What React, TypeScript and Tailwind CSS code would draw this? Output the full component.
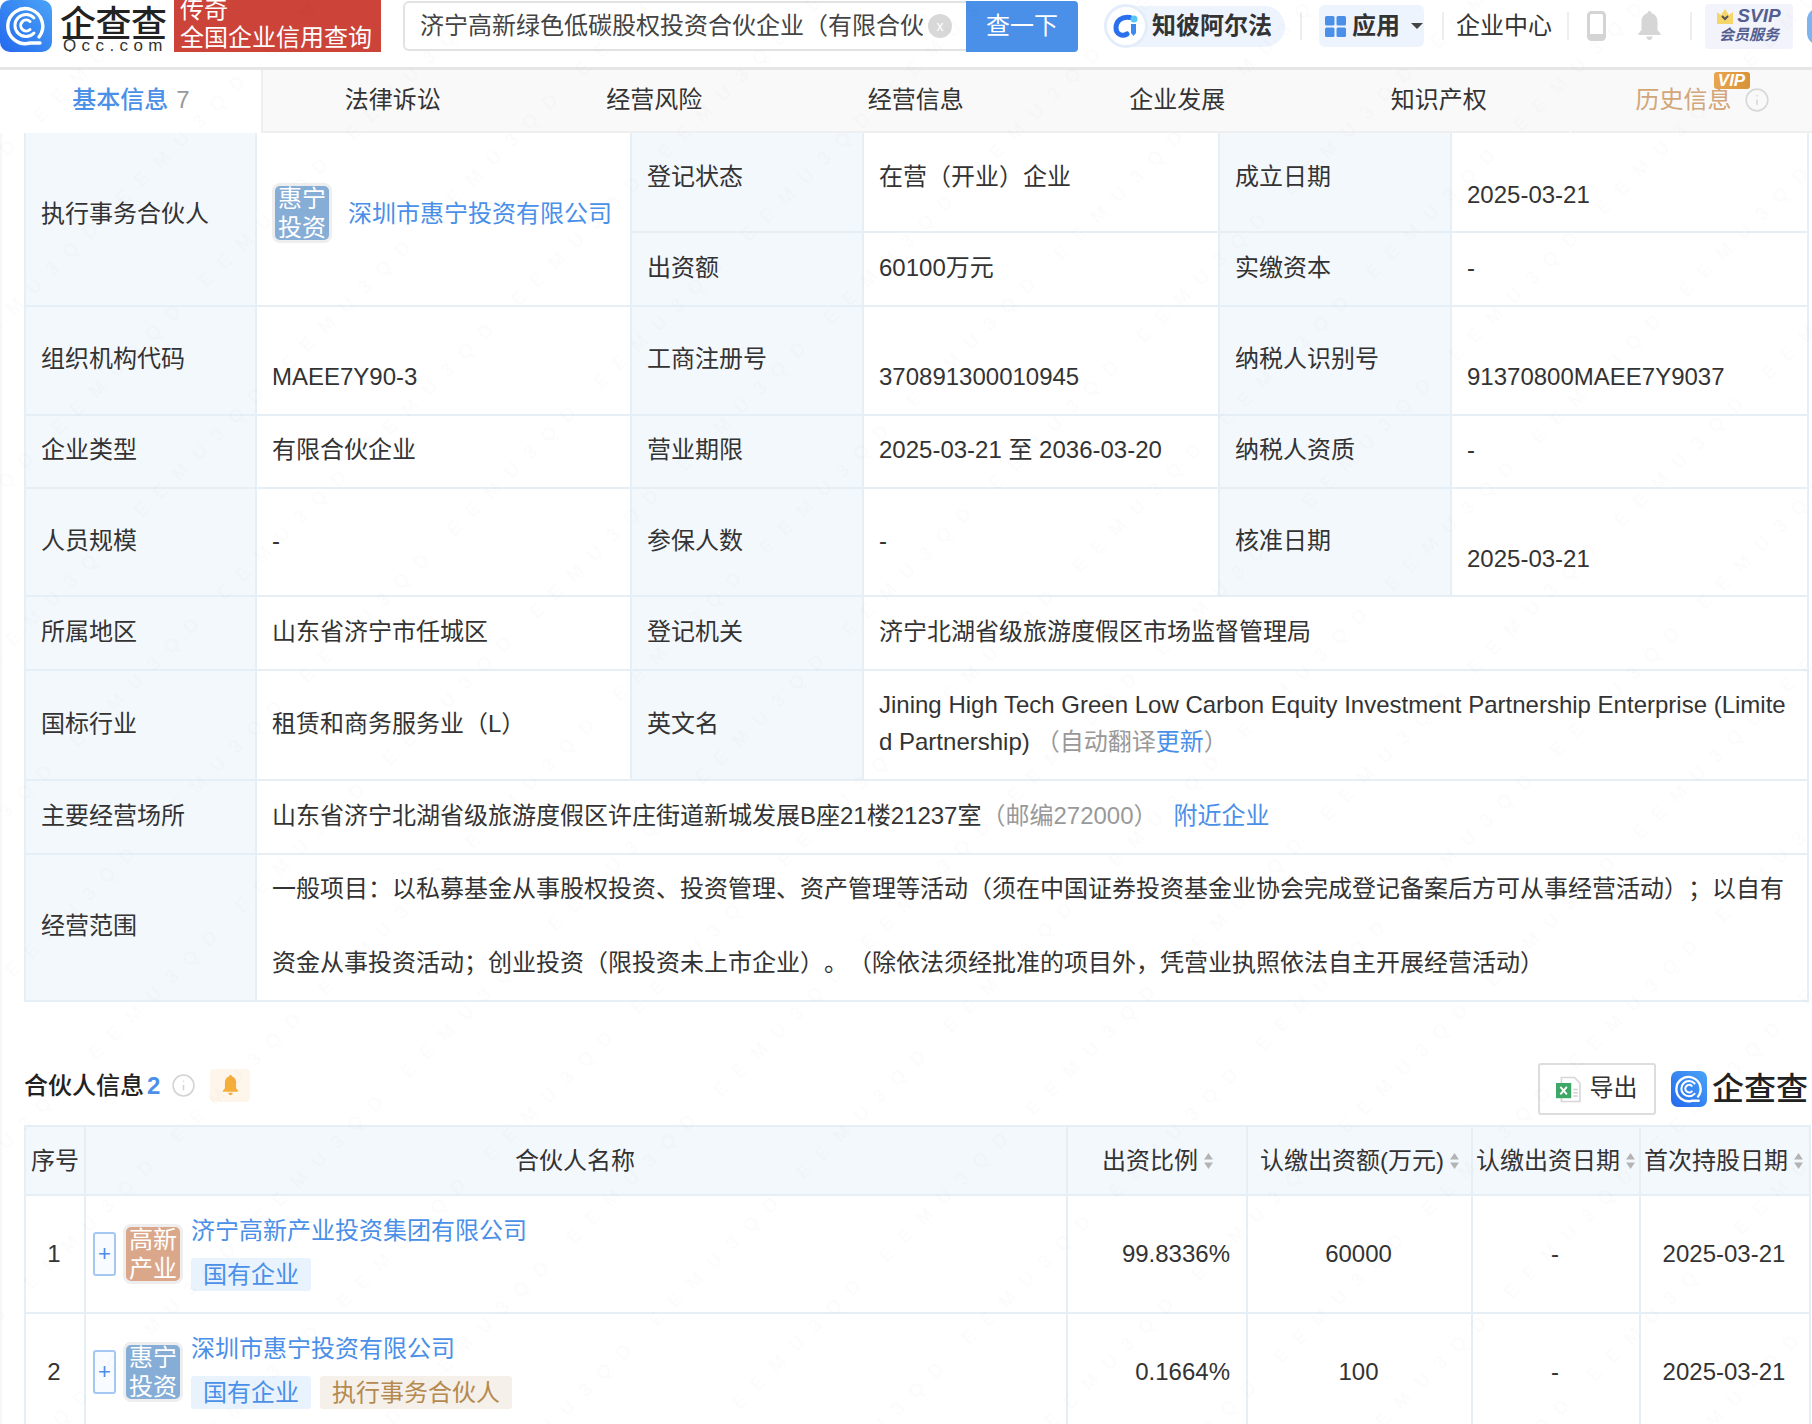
import { Info } from "lucide-react";
import type { ReactNode } from "react";

const partners = [
  { no: 1, logo: ["高新", "产业"], logoBg: "bg-[#dba78b]", name: "济宁高新产业投资集团有限公司", tags: ["国有企业"], ratio: "99.8336%", amount: "60000" },
  { no: 2, logo: ["惠宁", "投资"], logoBg: "bg-[#85add6]", name: "深圳市惠宁投资有限公司", tags: ["国有企业", "执行事务合伙人"], ratio: "0.1664%", amount: "100" },
];

const tabs = ["法律诉讼", "经营风险", "经营信息", "企业发展", "知识产权"];

// faint page watermark, a rotated tile with the repeating text
function Watermark() {
  return (
    <svg className="pointer-events-none absolute inset-0 z-20 h-full w-full">
      <defs>
        <pattern id="mark" width="208" height="117" patternUnits="userSpaceOnUse" patternTransform="rotate(-45) translate(146 96)">
          <text x="4" y="20" fontSize="18" letterSpacing="14" fill="#000" fillOpacity="0.016">
            EEMU3QD
          </text>
        </pattern>
      </defs>
      <rect width="100%" height="100%" fill="url(#mark)" />
    </svg>
  );
}

function QccIcon({ size, id }: { size: number; id: string }) {
  return (
    <svg width={size} height={size} viewBox="0 0 52 52" className="shrink-0">
      <defs>
        <linearGradient id={id} x1="0" y1="1" x2="1" y2="0">
          <stop offset="0" stopColor="#2468ee" />
          <stop offset="1" stopColor="#4aa4f6" />
        </linearGradient>
      </defs>
      <rect width="52" height="52" rx="10" fill={`url(#${id})`} />
      <path d="M39 37 A17.5 17.5 0 1 0 30 43 L40 43" fill="none" stroke="#fff" strokeWidth="3.4" strokeLinecap="round" />
      <path d="M34 33 A11 11 0 1 1 34 18" fill="none" stroke="#fff" strokeWidth="3" strokeLinecap="round" />
      <path d="M30 29.5 A5.5 5.5 0 1 1 30 21.5" fill="none" stroke="#fff" strokeWidth="3" strokeLinecap="round" />
    </svg>
  );
}

function SolidBell({ className }: { className: string }) {
  return (
    <svg viewBox="0 0 24 30" className={className} fill="currentColor">
      <path d="M12 0c1.3 0 2 1 2 2.2C18.4 3.2 20 7 20 11v8l3 3.6c.3.5 0 1.4-.8 1.4H1.800c-.8 0-1.100-.9-.8-1.400L4 19v-8c0-4 1.600-7.800 6-8.800C10 1 10.700 0 12 0z" />
      <path d="M9 25.500h6c0 2-1.300 3.500-3 3.500s-3-1.500-3-3.500z" />
    </svg>
  );
}

function SortCaret() {
  return (
    <svg width="9" height="20" viewBox="0 0 9 20" className="shrink-0" fill="#b4b4b4">
      <path d="M4.500 2 9 8.500H0z" />
      <path d="M4.500 18 9 11.500H0z" />
    </svg>
  );
}

function Divider() {
  return <span className="block h-[28px] w-[2px] shrink-0 bg-[#eeeeee]" />;
}

function Header() {
  return (
    <header className="flex h-[70px] shrink-0 items-start border-b-[3px] border-[#e6e6e6] bg-white">
      <div className="flex h-[52px] w-[1812px] items-center overflow-hidden text-[#333333]">
        <QccIcon size={52} id="qcc-top" />
        <div className="ml-[8px] flex w-[108px] shrink-0 flex-col pt-[8px]">
          <span className="text-[36px] font-medium leading-[34px] tracking-[-0.5px] text-[#222222]">企查查</span>
          <span className="-mt-[3px] ml-[3px] whitespace-nowrap text-[17px] font-medium leading-[14px] tracking-[5.400px] text-[#333333]">Qcc.com</span>
        </div>
        <div className="ml-[6px] flex h-[52px] w-[207px] shrink-0 flex-col justify-end overflow-hidden bg-[#cc4339] pl-[6px] text-[24px] leading-[28px] text-white">
          <span className="shrink-0">传奇</span>
          <span className="shrink-0">全国企业信用查询</span>
        </div>
        <div className="ml-[22px] flex h-[50px] w-[563px] shrink-0 items-center rounded-l-[6px] border-2 border-r-0 border-[#e2e2e2] pl-[15px]">
          <span className="w-[503px] shrink-0 overflow-hidden whitespace-nowrap text-[#444444]">济宁高新绿色低碳股权投资合伙企业（有限合伙）</span>
          <span className="ml-[5px] flex h-[24px] w-[24px] shrink-0 items-center justify-center rounded-full bg-[#d8d8d8] text-[14px] text-white">x</span>
        </div>
        <button className="h-[51px] w-[112px] shrink-0 rounded-r-[4px] bg-[#4a8fe8] text-white">查一下</button>
        <div className="ml-[27px] flex h-[41px] w-[180px] shrink-0 items-center rounded-full bg-[#eef4fd]">
          <span className="-ml-[1px] flex h-[44px] w-[44px] shrink-0 items-center justify-center rounded-full border-[3px] border-[#e3edfb] bg-white">
            <svg width="26" height="26" viewBox="0 0 26 26">
              <path d="M17 4.500C9 3 3 8 3 15c0 6 6 9 11 6" fill="none" stroke="#2a70ee" strokeWidth="5" strokeLinecap="round" />
              <circle cx="21" cy="6" r="3.500" fill="#59c5f5" />
              <path d="M18 11h5v9l-2.500 3-2.500-3z" fill="#3d8bf0" />
            </svg>
          </span>
          <span className="ml-[4px] whitespace-nowrap font-bold text-[#333333]">知彼阿尔法</span>
        </div>
        <span className="ml-[15px]"><Divider /></span>
        <div className="ml-[17px] flex h-[42px] w-[105px] shrink-0 items-center rounded-[6px] bg-[#eef4fd] pl-[6px]">
          <svg width="21" height="21" viewBox="0 0 21 21" fill="#4a90e8" className="shrink-0">
            <rect width="9.500" height="9.500" rx="1.500" />
            <rect x="11.500" width="9.500" height="9.500" rx="1.500" />
            <rect y="11.500" width="9.500" height="9.500" rx="1.500" />
            <rect x="11.500" y="11.500" width="9.500" height="9.500" rx="1.500" />
          </svg>
          <span className="ml-[6px] font-bold text-[#333333]">应用</span>
          <span className="ml-[11px] h-0 w-0 border-x-[6px] border-t-[6px] border-x-transparent border-t-[#444444]" />
        </div>
        <span className="ml-[18px]"><Divider /></span>
        <span className="ml-[12px] shrink-0">企业中心</span>
        <span className="ml-[15px]"><Divider /></span>
        <svg width="19" height="30" viewBox="0 0 19 30" className="ml-[18px] shrink-0">
          <rect x="1.500" y="1.500" width="16" height="27" rx="3" fill="#fff" stroke="#d4d4d4" strokeWidth="3" />
          <rect x="1.500" y="23" width="16" height="5.500" rx="2" fill="#d4d4d4" />
        </svg>
        <SolidBell className="ml-[31px] h-[30px] w-[25px] shrink-0 text-[#d6d6d6]" />
        <span className="ml-[28px]"><Divider /></span>
        <div className="ml-[13px] flex h-[45px] w-[88px] shrink-0 flex-col items-center justify-center rounded-[4px] bg-[#f3f4fb] text-[#555e90]">
          <div className="flex items-center gap-[4px] leading-[18px]">
            <svg width="16" height="15" viewBox="0 0 16 15" className="shrink-0">
              <path d="M0 3l4 3 4-6 4 6 4-3v12H0z" fill="#f6d56a" />
              <path d="M5 7l3 3 3-3" fill="none" stroke="#555" strokeWidth="2" />
            </svg>
            <span className="text-[19px] font-bold italic">SVIP</span>
          </div>
          <span className="text-[15px] font-bold italic leading-[20px]">会员服务</span>
        </div>
        <span className="ml-[14px] h-[37px] w-[12px] shrink-0 rounded-l-full bg-[#7fb2f0]" />
      </div>
    </header>
  );
}

function Tabs() {
  return (
    <nav className="relative z-10 flex h-[63px] w-[1812px] shrink-0 overflow-hidden bg-[#f9f9f9] text-[24px] text-[#333333]">
      <div className="flex w-[263px] shrink-0 items-center justify-center gap-[8px] border-r-2 border-[#efefef] bg-white pb-[4px] pl-[1px]">
        <span className="font-medium text-[#4a8fe8]">基本信息</span>
        <span className="text-[#999999]">7</span>
      </div>
      {tabs.map((t) => (
        <div key={t} className="flex w-[261.500px] shrink-0 -translate-x-[1px] items-center justify-center border-b-2 border-[#efefef] pb-[2px]">
          {t}
        </div>
      ))}
      <div className="relative flex w-[261px] shrink-0 items-center border-b-2 border-[#efefef] pb-[2px] pl-[65px] text-[#d2a679]">
        历史信息
        <Info size={26} strokeWidth={1.500} className="ml-[12px] text-[#d8d8d8]" />
        <span className="absolute left-[143px] top-[2px] flex h-[17px] w-[36px] items-center justify-center rounded-[3px] bg-linear-to-r from-[#e8a64f] to-[#d99238] text-[17px] font-bold italic leading-none text-white">VIP</span>
      </div>
    </nav>
  );
}

function Label({ children, rowSpan, first }: { children: ReactNode; rowSpan?: number; first?: boolean }) {
  return (
    <td rowSpan={rowSpan} className={rowSpan || first ? "border-2 border-[#e6eef6] bg-[#f3f8fd] px-[15px] pt-[4px]" : "border-2 border-[#e6eef6] bg-[#f3f8fd] px-[15px] pb-[4px]"}>
      {children}
    </td>
  );
}

function Value({ children, colSpan, low }: { children: ReactNode; colSpan?: number; low?: boolean }) {
  return (
    <td colSpan={colSpan} className={low ? "border-2 border-[#e6eef6] px-[15px] pb-[4px] pt-[36px]" : "border-2 border-[#e6eef6] px-[15px] pb-[4px]"}>
      {children}
    </td>
  );
}

function CompanyLogo({ lines, bg }: { lines: string[]; bg: string }) {
  return (
    <span className={`flex h-[60px] w-[60px] shrink-0 flex-col items-center justify-center rounded-[8px] border-[3px] border-[#eeeeee] text-[24px] leading-[29px] text-white ${bg}`}>
      <span>{lines[0]}</span>
      <span>{lines[1]}</span>
    </span>
  );
}

function InfoTable() {
  return (
    <table className="w-[1783px] table-fixed border-collapse leading-[37px] text-[#333333]">
      <colgroup>
        <col className="w-[231px]" />
        <col className="w-[375px]" />
        <col className="w-[232px]" />
        <col className="w-[356px]" />
        <col className="w-[232px]" />
        <col className="w-[357px]" />
      </colgroup>
      <tbody>
        <tr className="h-[116px]">
          <Label rowSpan={2}>执行事务合伙人</Label>
          <td rowSpan={2} className="border-2 border-[#e6eef6] px-[15px] pt-[4px]">
            <div className="flex items-center gap-[16px]">
              <CompanyLogo lines={["惠宁", "投资"]} bg="bg-[#85add6]" />
              <a className="whitespace-nowrap text-[#4a8fe8]">深圳市惠宁投资有限公司</a>
            </div>
          </td>
          <Label first>登记状态</Label>
          <td className="border-2 border-[#e6eef6] px-[15px] pt-[4px]">在营（开业）企业</td>
          <Label first>成立日期</Label>
          <td className="border-2 border-[#e6eef6] px-[15px] pt-[40px]">2025-03-21</td>
        </tr>
        <tr className="h-[74px]">
          <Label>出资额</Label>
          <Value>60100万元</Value>
          <Label>实缴资本</Label>
          <Value>-</Value>
        </tr>
        <tr className="h-[109px]">
          <Label>组织机构代码</Label>
          <Value low>MAEE7Y90-3</Value>
          <Label>工商注册号</Label>
          <Value low>370891300010945</Value>
          <Label>纳税人识别号</Label>
          <Value low>91370800MAEE7Y9037</Value>
        </tr>
        <tr className="h-[73px]">
          <Label>企业类型</Label>
          <Value>有限合伙企业</Value>
          <Label>营业期限</Label>
          <Value>2025-03-21 至 2036-03-20</Value>
          <Label>纳税人资质</Label>
          <Value>-</Value>
        </tr>
        <tr className="h-[108px]">
          <Label>人员规模</Label>
          <Value>-</Value>
          <Label>参保人数</Label>
          <Value>-</Value>
          <Label>核准日期</Label>
          <Value low>2025-03-21</Value>
        </tr>
        <tr className="h-[74px]">
          <Label>所属地区</Label>
          <Value>山东省济宁市任城区</Value>
          <Label>登记机关</Label>
          <Value colSpan={3}>济宁北湖省级旅游度假区市场监督管理局</Value>
        </tr>
        <tr className="h-[110px]">
          <Label>国标行业</Label>
          <Value>租赁和商务服务业（L）</Value>
          <Label>英文名</Label>
          <Value colSpan={3}>
            <span className="break-all">
              Jining High Tech Green Low Carbon Equity Investment Partnership Enterprise (Limited Partnership)
              <span className="ml-[6px] text-[#999999]">（自动翻译<a className="text-[#4a8fe8]">更新</a>）</span>
            </span>
          </Value>
        </tr>
        <tr className="h-[74px]">
          <Label>主要经营场所</Label>
          <Value colSpan={5}>
            山东省济宁北湖省级旅游度假区许庄街道新城发展B座21楼21237室
            <span className="text-[#999999]">（邮编272000）</span>
            <a className="ml-[16px] text-[#4a8fe8]">附近企业</a>
          </Value>
        </tr>
        <tr className="h-[147px]">
          <Label>经营范围</Label>
          <Value colSpan={5}>
            <p className="-my-[4px] leading-[74px]">
              一般项目：以私募基金从事股权投资、投资管理、资产管理等活动（须在中国证券投资基金业协会完成登记备案后方可从事经营活动）；以自有资金从事投资活动；创业投资（限投资未上市企业）。（除依法须经批准的项目外，凭营业执照依法自主开展经营活动）
            </p>
          </Value>
        </tr>
      </tbody>
    </table>
  );
}

function SectionHeader() {
  return (
    <div className="mr-[4px] mt-[61px] mb-[10px] flex h-[52px] items-center text-[#333333]">
      <div className="mb-[7px] flex items-center">
        <span className="font-medium text-[#222222]">合伙人信息</span>
        <span className="ml-[3px] font-bold text-[#4a8fe8]">2</span>
        <Info size={25} strokeWidth={1.500} className="ml-[11px] text-[#d4d4d4]" />
        <span className="ml-[14px] flex h-[33px] w-[40px] items-center justify-center rounded-[4px] bg-[#fef6ea]">
          <SolidBell className="h-[21px] w-[17px] text-[#f5ad3c]" />
        </span>
      </div>
      <button className="ml-auto flex h-[52px] w-[118px] items-center justify-center gap-[8px] rounded-[3px] border-2 border-[#dddddd] bg-white">
        <svg width="25" height="27" viewBox="0 0 23 24" className="shrink-0">
          <path d="M5 1h12l5 5v17H5z" fill="#fff" stroke="#d6d6d6" strokeWidth="1.500" />
          <path d="M16 12h4M16 15h4M16 18h4" stroke="#d0d0d0" strokeWidth="1.200" />
          <rect x="0" y="6" width="14" height="14" fill="#3fa766" />
          <path d="M4 9.500l6 7M10 9.500l-6 7" stroke="#fff" strokeWidth="1.800" />
        </svg>
        <span className="pb-[2px] text-[#333333]">导出</span>
      </button>
      <span className="ml-[15px]"><QccIcon size={36} id="qcc-small" /></span>
      <span className="ml-[5px] whitespace-nowrap text-[32px] font-medium leading-none text-[#222222]">企查查</span>
    </div>
  );
}

function PartnerTable() {
  const head = "border-2 border-[#e6eef6] bg-[#f3f8fd] font-normal";
  const cell = "border-2 border-[#e6eef6] pr-[2px] text-center";
  return (
    <table className="w-[1785px] table-fixed border-collapse text-[#333333]">
      <colgroup>
        <col className="w-[60px]" />
        <col className="w-[982px]" />
        <col className="w-[180px]" />
        <col className="w-[225px]" />
        <col className="w-[168px]" />
        <col className="w-[170px]" />
      </colgroup>
      <thead>
        <tr className="h-[69px]">
          <th className={`${head} pl-[5px] text-left`}>序号</th>
          <th className={`${head} pr-[2px]`}>合伙人名称</th>
          {[
            ["出资比例", "pl-[34px]"],
            ["认缴出资额(万元)", "pl-[12px]"],
            ["认缴出资日期", "pl-[3px]"],
            ["首次持股日期", "pl-[3px]"],
          ].map(([t, pad]) => (
            <th key={t} className={`${head} ${pad}`}>
              <span className="flex items-center gap-[6px] whitespace-nowrap">
                {t}
                <SortCaret />
              </span>
            </th>
          ))}
        </tr>
      </thead>
      <tbody>
        {partners.map((p) => (
          <tr key={p.no} className="h-[118px]">
            <td className={cell}>{p.no}</td>
            <td className="border-2 border-[#e6eef6] pl-[7px]">
              <div className="flex items-center">
                <span className="flex h-[44px] w-[23px] shrink-0 items-center justify-center rounded-[3px] border-2 border-[#a5c8f2] bg-[#f8fbff] text-[22px] font-medium leading-none text-[#4a8fe8]">+</span>
                <span className="ml-[7px]"><CompanyLogo lines={p.logo} bg={p.logoBg} /></span>
                <div className="ml-[8px] flex flex-col pb-[3px]">
                  <a className="whitespace-nowrap leading-[34px] text-[#4a8fe8]">{p.name}</a>
                  <div className="mt-[10px] flex gap-[9px]">
                    {p.tags.map((t) => (
                      <span
                        key={t}
                        className={
                          t === "国有企业"
                            ? "flex h-[33px] items-center rounded-[3px] bg-[#e9f3fd] px-[12px] text-[#4a8fe8]"
                            : "flex h-[33px] items-center rounded-[3px] bg-[#f5f0e9] px-[12px] text-[#b58a50]"
                        }
                      >
                        {t}
                      </span>
                    ))}
                  </div>
                </div>
              </div>
            </td>
            <td className="border-2 border-[#e6eef6] pr-[16px] text-right">{p.ratio}</td>
            <td className={cell}>{p.amount}</td>
            <td className={cell}>-</td>
            <td className={cell}>2025-03-21</td>
          </tr>
        ))}
      </tbody>
    </table>
  );
}

export default function App() {
  return (
    <div className="relative flex h-[1424px] w-[1812px] flex-col overflow-hidden bg-white font-['Liberation_Sans','Noto_Sans_CJK_SC',sans-serif] text-[24px] [text-spacing-trim:space-all]">
      <Header />
      <Tabs />
      <main className="-mt-[18px] flex-1 border-l-2 border-[#f7f7f7] pl-[22px]">
        <InfoTable />
        <SectionHeader />
        <PartnerTable />
      </main>
      <Watermark />
    </div>
  );
}
